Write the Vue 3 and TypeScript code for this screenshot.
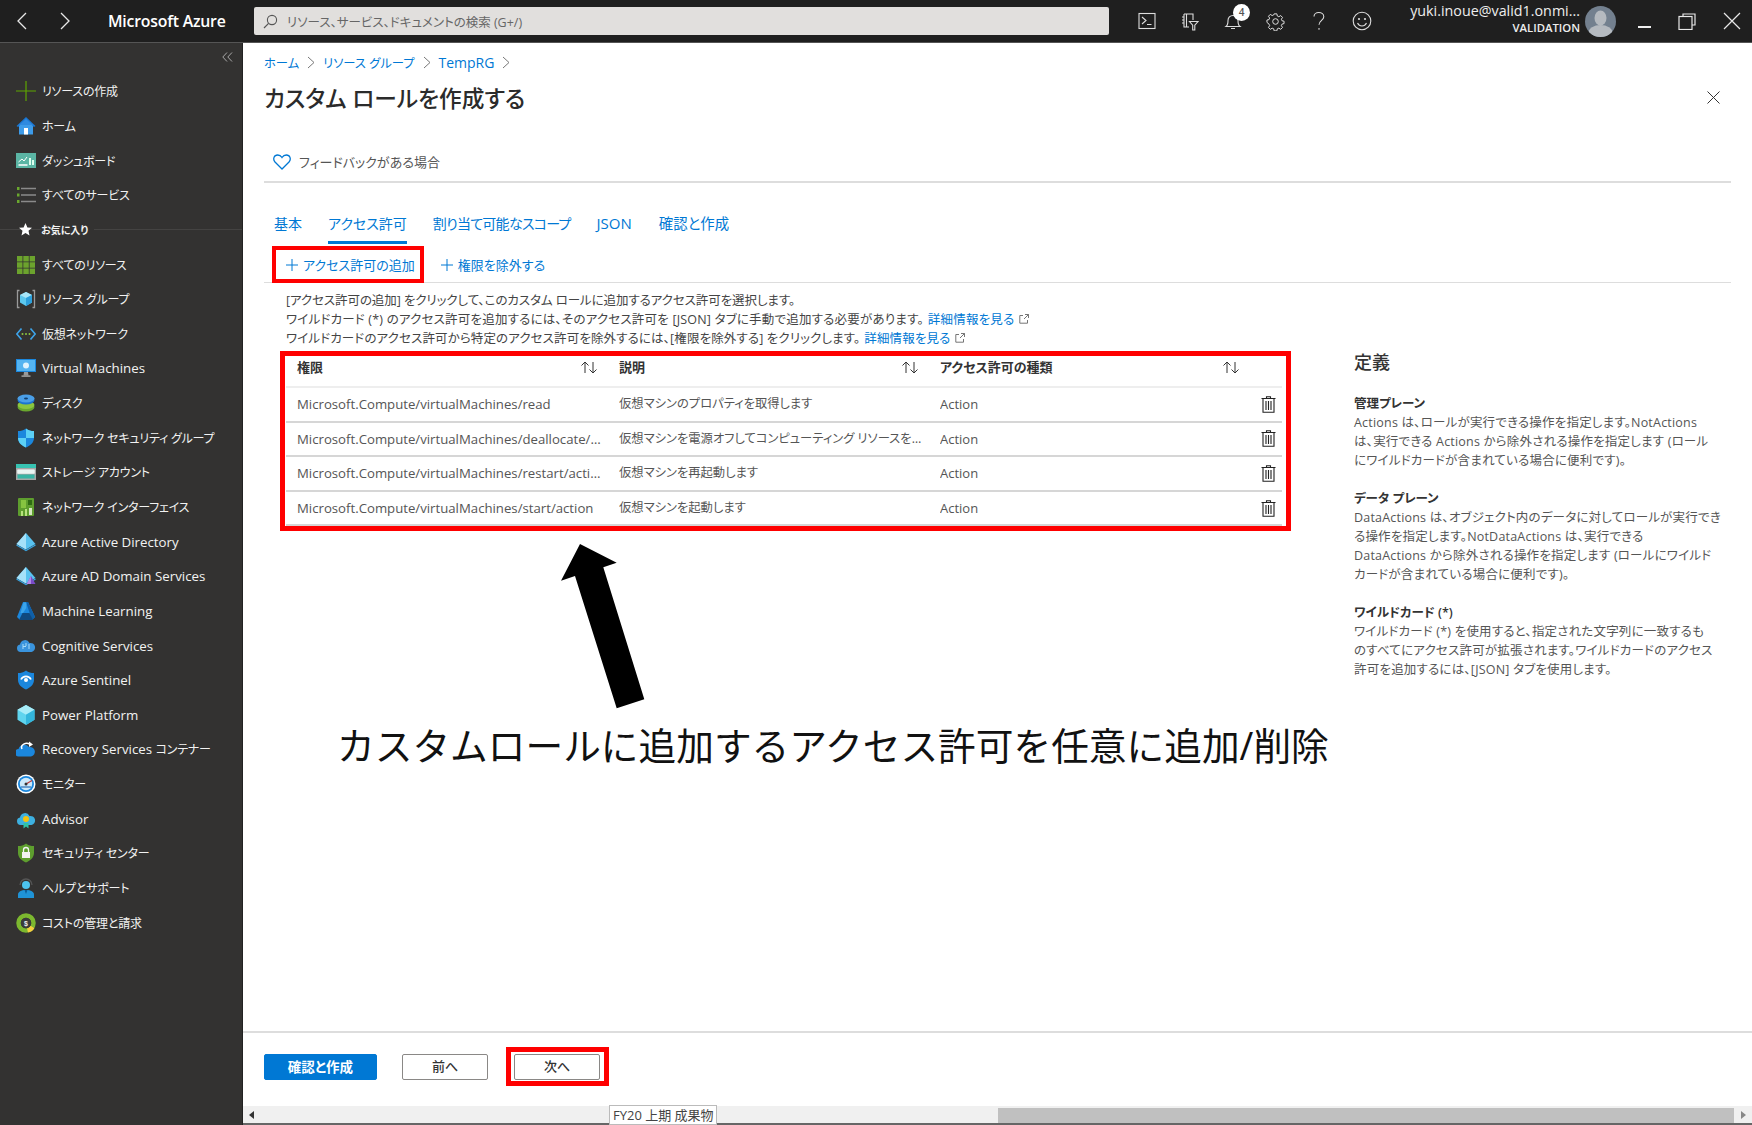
<template>
  <div class="app">
    <header class="topbar">
      <div class="nav-arrows">
        <svg width="11" height="18" viewBox="0 0 11 18"><path d="M10 1 2 9l8 8" fill="none" stroke="#e8e8e8" stroke-width="1.3" /></svg>
        <svg width="11" height="18" viewBox="0 0 11 18"><path d="m1 1 8 8-8 8" fill="none" stroke="#e8e8e8" stroke-width="1.3" /></svg>
      </div>
      <div class="brand">Microsoft Azure</div>
      <div class="search">
        <svg width="15" height="15" viewBox="0 0 15 15"><circle cx="9" cy="6" r="4.6" fill="none" stroke="#555" stroke-width="1.1" /><path d="M5.6 9.4 1 14" stroke="#555" stroke-width="1.2" /></svg>
        <span>リソース、サービス、ドキュメントの検索 (G+/)</span>
      </div>
      <div class="top-icons">
        <span class="top-icon"><svg width="18" height="18" viewBox="0 0 18 18"><rect x="1" y="1.5" width="16" height="15" fill="none" stroke="#ddd" stroke-width="1.1" /><path d="m4 5 4 3.5L4 12M9 12.5h4.5" fill="none" stroke="#ddd" stroke-width="1.1" /></svg></span>
        <span class="top-icon"><svg width="18" height="20" viewBox="0 0 18 20"><path d="M3 3h9v6M3 3v13h5M5.500 3v13M1 6h2M1 9h2M1 12h2" fill="none" stroke="#ddd" stroke-width="1.1" /><path d="M8.500 10.500h8.500l-3.200 3.600V19h-2.100v-4.900z" fill="none" stroke="#ddd" stroke-width="1.1" /></svg></span>
        <span class="top-icon bell">
          <svg width="18" height="20" viewBox="0 0 18 20"><path d="M2 15.500c2-1.500 2-3.500 2-6 0-3 2-5 5-5s5 2 5 5c0 2.500 0 4.500 2 6zM7 17.500h4" fill="none" stroke="#ddd" stroke-width="1.1" /></svg>
          <span class="badge">4</span>
        </span>
        <span class="top-icon"><svg width="19" height="19" viewBox="0 0 19 19"><circle cx="9.500" cy="9.500" r="2.800" fill="none" stroke="#ddd" stroke-width="1" /><path d="M8 1.500h3l.5 2.400 1.700.8 2.100-1.300 2 2.100-1.300 2 .7 1.700 2.300.5v2.600l-2.300.6-.7 1.700 1.300 2-2 2.100-2.100-1.300-1.700.7-.5 2.300H8l-.5-2.300-1.700-.7-2.100 1.300-2-2.100 1.300-2-.7-1.700L0 11V8.400l2.300-.5L3 6.200 1.700 4.200l2-2.100 2.100 1.300 1.700-.7z" transform="translate(.95 .5) scale(.9)" fill="none" stroke="#ddd" stroke-width="1.100" /></svg></span>
        <span class="top-icon"><svg width="14" height="20" viewBox="0 0 14 20"><path d="M2 5.500C2 3 4 1.500 6.800 1.500s5 1.700 5 4.200c0 3.500-4.800 3.800-4.800 8M7 17v1.800" fill="none" stroke="#ddd" stroke-width="1.100" /></svg></span>
        <span class="top-icon"><svg width="20" height="20" viewBox="0 0 20 20"><circle cx="10" cy="10" r="8.800" fill="none" stroke="#ddd" stroke-width="1.100" /><circle cx="7" cy="8" r="1.100" fill="#ddd" /><circle cx="13" cy="8" r="1.100" fill="#ddd" /><path d="M5.500 12c1 2 2.700 3 4.500 3s3.500-1 4.500-3" fill="none" stroke="#ddd" stroke-width="1.100" /></svg></span>
      </div>
      <div class="user">
        <div class="user-mail">yuki.inoue@valid1.onmi...</div>
        <div class="user-org">VALIDATION</div>
      </div>
      <svg class="avatar" width="31" height="31" viewBox="0 0 31 31">
        <defs><clipPath id="av"><circle cx="15.500" cy="15.500" r="15.500" /></clipPath></defs>
        <circle cx="15.500" cy="15.500" r="15.500" fill="#73808f" />
        <g clip-path="url(#av)" fill="#b5bac0"><ellipse cx="15.500" cy="12" rx="6" ry="7.500" /><ellipse cx="15.500" cy="27" rx="12" ry="8" /></g>
      </svg>
      <div class="win-controls">
        <span class="win-min"></span>
        <svg width="18" height="17" viewBox="0 0 18 17"><path d="M5 3.500V1h12v11h-3" fill="none" stroke="#e8e8e8" stroke-width="1.200" /><rect x="1" y="3.500" width="13" height="13" fill="none" stroke="#e8e8e8" stroke-width="1.200" /></svg>
        <svg width="18" height="18" viewBox="0 0 18 18"><path d="m1 1 16 16M17 1 1 17" stroke="#e8e8e8" stroke-width="1.200" /></svg>
      </div>
    </header>

    <aside class="sidebar">
      <div class="collapse">
        <svg width="11" height="10" viewBox="0 0 11 10"><path d="M5 .5.800 5 5 9.500M10 .5 5.800 5l4.200 4.500" fill="none" stroke="#a8a8a8" stroke-width="1" /></svg>
      </div>
      <nav class="side-nav">
        <template v-for="item in navItems" :key="item.label">
          <div v-if="item.fav" class="side-fav">
            <svg width="13" height="13" viewBox="0 0 13 13"><path d="m6.500 0 1.900 4.400 4.600.4-3.500 3 1 4.600-4-2.400-4 2.400 1-4.600-3.500-3 4.600-.4z" fill="#fff" /></svg>
            <span>{{ item.label }}</span>
          </div>
          <div v-else class="side-item">
            <span class="side-icon" v-html="icons[item.icon]"></span>
            <span class="side-label">
              <span v-for="part in splitLabel(item.label)" :key="part" :class="{ ja: isJa(part) }">{{ part }}</span>
            </span>
          </div>
        </template>
      </nav>
    </aside>

    <main class="main">
      <div class="content">
        <div class="breadcrumb">
          <template v-for="crumb in crumbs" :key="crumb">
            <a :class="{ ja: isJa(crumb) }">{{ crumb }}</a>
            <svg width="8" height="13" viewBox="0 0 8 13"><path d="m1 1 6 5.500L1 12" fill="none" stroke="#777" stroke-width="1" /></svg>
          </template>
        </div>
        <div class="title-row">
          <h1>カスタム ロールを作成する</h1>
          <svg width="13" height="13" viewBox="0 0 13 13"><path d="m.5.500 12 12M12.500.500l-12 12" stroke="#333" stroke-width="1" /></svg>
        </div>
        <div class="feedback">
          <svg width="18" height="16" viewBox="0 0 18 16"><path d="M9 15 2 8C-.5 5 1 1 4.700 1 6.700 1 8 2 9 3.500 10 2 11.300 1 13.300 1 17 1 18.500 5 16 8z" fill="none" stroke="#0078d4" stroke-width="1.300" /></svg>
          <span>フィードバックがある場合</span>
        </div>
        <div class="tabs">
          <a v-for="tab in tabs" :key="tab" class="tab" :class="{ active: tab === 'アクセス許可' }">{{ tab }}</a>
        </div>
        <div class="commands">
          <a class="command"><svg width="12" height="12" viewBox="0 0 12 12"><path d="M6 0v12M0 6h12" stroke="#0078d4" stroke-width="1" /></svg>アクセス許可の追加</a>
          <a class="command"><svg width="12" height="12" viewBox="0 0 12 12"><path d="M6 0v12M0 6h12" stroke="#0078d4" stroke-width="1" /></svg>権限を除外する</a>
        </div>
        <div class="info">
          <p>[アクセス許可の追加] をクリックして、このカスタム ロールに追加するアクセス許可を選択します。</p>
          <p>ワイルドカード (*) のアクセス許可を追加するには、そのアクセス許可を [JSON] タブに手動で追加する必要があります。<a>詳細情報を見る</a><svg class="ext" width="10" height="10" viewBox="0 0 10 10"><path d="M4 1.500H.8v7.700h7.700V6M5 5l4.500-4.500M6 .500h3.500V4" fill="none" stroke="#666" stroke-width=".9" /></svg></p>
          <p>ワイルドカードのアクセス許可から特定のアクセス許可を除外するには、[権限を除外する] をクリックします。<a>詳細情報を見る</a><svg class="ext" width="10" height="10" viewBox="0 0 10 10"><path d="M4 1.500H.8v7.700h7.700V6M5 5l4.500-4.500M6 .500h3.500V4" fill="none" stroke="#666" stroke-width=".9" /></svg></p>
        </div>
        <div class="body">
          <div class="perm-table">
            <div class="perm-row perm-head">
              <div v-for="col in columns" :key="col" class="head-cell">
                <span>{{ col }}</span>
                <svg width="18" height="13" viewBox="0 0 18 13"><path d="M5 12V1M1.500 4.500 5 1l3.500 3.500M13 1v11M9.500 8.500 13 12l3.500-3.500" fill="none" stroke="#333" stroke-width="1" /></svg>
              </div>
              <div></div>
            </div>
            <div v-for="row in permissions" :key="row.name" class="perm-row">
              <div class="cell cell-name">{{ row.name }}</div>
              <div class="cell cell-desc">{{ row.desc }}</div>
              <div class="cell">Action</div>
              <div class="trash">
                <svg width="15" height="17" viewBox="0 0 15 17"><path d="M5.500 2V.7h4V2M.5 2.500h14M2 2.500V16.300h11V2.500M5 5v9M7.500 5v9M10 5v9" fill="none" stroke="#222" stroke-width="1.100" /></svg>
              </div>
            </div>
          </div>
          <section class="defs">
            <h2>定義</h2>
            <div v-for="def in definitions" :key="def.title" class="def">
              <h3>{{ def.title }}</h3>
              <p>
                <span v-for="line in def.lines" :key="line" class="def-line">{{ line }}</span>
              </p>
            </div>
          </section>
        </div>
      </div>
      <footer class="footer">
        <button class="btn primary">確認と作成</button>
        <button class="btn">前へ</button>
        <button class="btn">次へ</button>
      </footer>
      <div class="hscroll">
        <svg width="5" height="8" viewBox="0 0 5 8"><path d="M5 0v8L0 4z" fill="#333" /></svg>
        <span class="hscroll-thumb"></span>
        <svg width="5" height="8" viewBox="0 0 5 8"><path d="M0 0v8l5-4z" fill="#888" /></svg>
      </div>
    </main>

    <!-- annotations pasted over the screenshot -->
    <div class="mark mark-add"></div>
    <div class="mark mark-table"></div>
    <div class="mark mark-next"></div>
    <svg class="big-arrow" width="100" height="170" viewBox="0 0 100 170">
      <path d="M40 4 21 40.700 35 36 76.700 168.300 104.300 159.300 63.300 27.300 76.700 22.700z" fill="#000" />
    </svg>
    <div class="note">カスタムロールに追加するアクセス許可を任意に追加/削除</div>
    <div class="tooltip">FY20 上期 成果物</div>
  </div>
</template>

<script setup lang="ts">
type NavItem = { label: string; icon: string; fav?: boolean }

const navItems: NavItem[] = [
  { label: 'リソースの作成', icon: 'plus' },
  { label: 'ホーム', icon: 'home' },
  { label: 'ダッシュボード', icon: 'dash' },
  { label: 'すべてのサービス', icon: 'list' },
  { label: 'お気に入り', icon: '', fav: true },
  { label: 'すべてのリソース', icon: 'grid' },
  { label: 'リソース グループ', icon: 'group' },
  { label: '仮想ネットワーク', icon: 'vnet' },
  { label: 'Virtual Machines', icon: 'vm' },
  { label: 'ディスク', icon: 'disk' },
  { label: 'ネットワーク セキュリティ グループ', icon: 'nsg' },
  { label: 'ストレージ アカウント', icon: 'storage' },
  { label: 'ネットワーク インターフェイス', icon: 'nic' },
  { label: 'Azure Active Directory', icon: 'aad' },
  { label: 'Azure AD Domain Services', icon: 'aadds' },
  { label: 'Machine Learning', icon: 'ml' },
  { label: 'Cognitive Services', icon: 'cog' },
  { label: 'Azure Sentinel', icon: 'sentinel' },
  { label: 'Power Platform', icon: 'power' },
  { label: 'Recovery Services コンテナー', icon: 'recovery' },
  { label: 'モニター', icon: 'monitor' },
  { label: 'Advisor', icon: 'advisor' },
  { label: 'セキュリティ センター', icon: 'security' },
  { label: 'ヘルプとサポート', icon: 'help' },
  { label: 'コストの管理と請求', icon: 'cost' },
]

const isJa = (text: string) => /[^\x00-\x7f]/.test(text)
// latin and japanese runs get different sizes, so mixed labels are split
const splitLabel = (label: string) => label.split(/(?<=[\x00-\x7f])(?=[^\x00-\x7f ])/)

const svg = (body: string) => `<svg width="20" height="20" viewBox="0 0 20 20">${body}</svg>`
const cloud = (fill: string) => `<path d="M4.500 16A3.800 3.800 0 0 1 4 8.500 5 5 0 0 1 13.500 7 4.500 4.500 0 0 1 15.500 16z" fill="${fill}"/>`

const icons: Record<string, string> = {
  plus: svg('<path d="M10 0v20M0 10h20" stroke="#5ea500" stroke-width="1.200"/>'),
  home: svg('<path d="M3 9h14v9.500H3z" fill="#3d9be9"/><path d="M10 1 .5 10l1.500 1L10 4l8 7 1.500-1z" fill="#1976d2"/><path d="M10 3 3 9h14z" fill="#2f8ae0"/><rect x="8" y="12" width="4" height="6.500" fill="#fff"/>'),
  dash: svg('<rect x="0" y="2" width="20" height="15" fill="#5bb5a4"/><path d="M2.500 11 6 8l2 2 3-4" fill="none" stroke="#fff" stroke-width="1"/><path d="M2.500 14h9" stroke="#fff" stroke-width="1.500"/><path d="M14 7v7M17 9v5" stroke="#dfe" stroke-width="2"/>'),
  list: svg('<path d="M5 3.500h15M5 10h15M5 16.500h15" stroke="#8a8a8a" stroke-width="1.400"/><path d="M1 2h2.500v3H1zM1 8.500h2.500v3H1zM1 15h2.500v3H1z" fill="#6aa82e"/>'),
  grid: svg('<path d="M1 1h5.500v5.500H1zM7.300 1h5.500v5.500H7.300zM13.600 1H19v5.500h-5.400zM1 7.300h5.500v5.500H1zM7.300 7.300h5.500v5.500H7.300zM13.600 7.300H19v5.500h-5.400zM1 13.600h5.500V19H1zM7.300 13.600h5.500V19H7.300zM13.600 13.600H19V19h-5.400z" fill="#6ca32d"/>'),
  group: svg('<path d="M3.500 1.500H1.500v17h2M16.500 1.500h2v17h-2" fill="none" stroke="#9a9a9a" stroke-width="1.300"/><path d="m10 3 6 3v7.500l-6 3.500-6-3.500V6z" fill="#5cc8ee"/><path d="m10 3 6 3-6 3-6-3z" fill="#a8e6f8"/><path d="M10 9v8l6-3.500V6z" fill="#2c9fdb"/>'),
  vnet: svg('<path d="M5.500 4.500.8 10l4.700 5.500M14.500 4.500l4.700 5.500-4.700 5.500" fill="none" stroke="#3ea3e8" stroke-width="1.700"/><circle cx="6.500" cy="10" r="1" fill="#8cc63f"/><circle cx="10" cy="10" r="1" fill="#8cc63f"/><circle cx="13.500" cy="10" r="1" fill="#8cc63f"/>'),
  vm: svg('<rect x="0" y="1" width="20" height="13" fill="#1b87dd"/><rect x="1" y="2" width="18" height="11" fill="#55b4f0"/><circle cx="10" cy="7.500" r="3" fill="#dff3fd"/><path d="M8 14h4l.5 3.500h-5z" fill="#999"/><path d="M5.500 17.500h9v1.200h-9z" fill="#bbb"/>'),
  disk: svg('<ellipse cx="10" cy="14" rx="8.500" ry="4.500" fill="#6aa82e"/><ellipse cx="10" cy="12" rx="8.500" ry="4" fill="#8cc63f"/><ellipse cx="10" cy="7" rx="8.500" ry="4.500" fill="#1b75d0"/><ellipse cx="10" cy="5.500" rx="8.500" ry="4" fill="#4a9fe8"/><ellipse cx="10" cy="5.500" rx="2" ry="1" fill="#123e6e"/>'),
  nsg: svg('<path d="M10 .5c2.500 2 5 2.500 8 2.500v7c0 4.500-3.500 7.500-8 9.500-4.500-2-8-5-8-9.500V3c3 0 5.500-.5 8-2.500z" fill="#1b87dd"/><path d="M10 .5c2.500 2 5 2.500 8 2.500v7H10zM2 10h8v9.500C5.500 17.500 2 14.500 2 10z" fill="#5cd0f5"/>'),
  storage: svg('<rect x="0" y="2" width="20" height="16" fill="#a6a6a6"/><rect x="0" y="2" width="20" height="4" fill="#37c2b1"/><rect x="1.500" y="7.500" width="17" height="4" fill="#fff"/><rect x="1.500" y="8" width="17" height="3.500" fill="#e9f5f3"/><rect x="1.500" y="12.500" width="17" height="4" fill="#37b4a4"/>'),
  nic: svg('<rect x="2" y="1" width="16" height="18" rx="1" fill="#5e9e2e"/><rect x="5" y="3" width="5" height="8" fill="#86c440"/><rect x="12" y="3" width="4" height="5" fill="#2f6b13"/><path d="M5 14h2v5H5zM9 12h2v7H9z" fill="#b8e27e"/><path d="M13 11h3v7h-3z" fill="#d5e8c0"/>'),
  aad: svg('<path d="m10 1 9.500 11-9.500 5.500L.5 12z" fill="#59c2ef"/><path d="M10 1v16.500L.5 12z" fill="#a5e1f9"/><path d="M.5 13 10 18.500l9.500-5.500" fill="none" stroke="#3aa4e0" stroke-width="1.300"/>'),
  aadds: svg('<path d="m10 1 9.500 11-9.500 5.500L.5 12z" fill="#59c2ef"/><path d="M10 1v16.500L.5 12z" fill="#a5e1f9"/><path d="M.5 13 10 18.500l9.500-5.500" fill="none" stroke="#3aa4e0" stroke-width="1.300"/><path d="m15 10 4.500 8h-9z" fill="#7b4bc8"/><path d="m15 10v8h-4.500z" fill="#b18be8"/>'),
  ml: svg('<path d="M7 1h5l7 15-3 3H4L1 16z" fill="#1b87dd"/><path d="M10 1h2l7 15-3 3z" fill="#0f5fa8"/><path d="M6.500 12h7l3.500 7H3z" fill="#10497f"/><path d="M7.500 1.500h2.800V7L7 12H4.500z" fill="#3ca4ea"/>'),
  cog: svg(cloud('#3a94dd') + '<path d="M7 8v5M7 10.500h3M13 8v5M10 7v3" stroke="#a8dcf8" stroke-width="1"/>'),
  sentinel: svg('<path d="M10 .5c2.500 2 5 2.500 8 2.500v7c0 4.500-3.500 7.500-8 9.500-4.500-2-8-5-8-9.500V3c3 0 5.500-.5 8-2.500z" fill="#1b87dd"/><circle cx="10" cy="10" r="2" fill="#fff"/><path d="M5 9.500a5.500 5.500 0 0 1 10 0" fill="none" stroke="#fff" stroke-width="1.700"/>'),
  power: svg('<path d="m10 0 8.500 4.800v10L10 20l-8.500-5.200v-10z" fill="#5fd4ee"/><path d="m10 0 8.500 4.800L10 9.800 1.500 4.800z" fill="#a8ecf8"/><path d="M10 9.800V20l8.500-5.200v-10z" fill="#33b6dc"/>'),
  recovery: svg('<path d="M4 18.500a3.700 3.700 0 0 1-.5-7.400A6 6 0 0 1 14 9a4.800 4.800 0 0 1 2 9.500z" fill="#1b87dd" transform="translate(-1 -1)"/><path d="M6 10a5 4 0 0 1 8-4.500" fill="none" stroke="#fff" stroke-width="1.500"/><path d="m13 2.500 4 3-4 2.500z" fill="#fff"/>'),
  monitor: svg('<circle cx="10" cy="10" r="9.500" fill="#fff"/><circle cx="10" cy="10" r="8" fill="#1b87dd"/><circle cx="10" cy="10" r="6.200" fill="#cde9fa"/><path d="M10 10 16 6.500" stroke="#c23a3a" stroke-width="1.200"/><circle cx="10" cy="10" r="1.500" fill="#333"/><path d="M5 13h10" stroke="#2c6fb5" stroke-width="1.200"/>'),
  advisor: svg(cloud('#3db0e0') + '<circle cx="10" cy="10" r="3" fill="#f4c20d"/><path d="M7.500 14v5.500l2.500-2 2.500 2V14z" fill="#2ec4a6"/>'),
  security: svg('<path d="M10 .5c2.500 2 5 2.500 8 2.500v7c0 4.500-3.500 7.500-8 9.500-4.500-2-8-5-8-9.500V3c3 0 5.500-.5 8-2.500z" fill="#5e9e2e"/><rect x="6" y="9" width="8" height="6" fill="#f2f2f2"/><path d="M7.500 9V7a2.500 2.500 0 0 1 5 0v2" fill="none" stroke="#f2f2f2" stroke-width="1.300"/>'),
  help: svg('<path d="M4 7a6 6 0 0 1 12 0" fill="none" stroke="#555" stroke-width="1.300"/><circle cx="10" cy="7" r="4" fill="#4cc3ee"/><path d="M2 20v-3.500C2 14 5 12 10 12s8 2 8 4.500V20z" fill="#1f93d6"/><path d="m8.500 12 1.500 4 1.500-4z" fill="#0d5c96"/>'),
  cost: svg('<circle cx="10" cy="10" r="7.500" fill="none" stroke="#7cb82f" stroke-width="4.500"/><path d="M16.500 14a7.500 7.500 0 0 1-5 3.400" fill="none" stroke="#f4d03f" stroke-width="4.500"/><circle cx="10" cy="10" r="5.200" fill="#3a3a3a"/><text x="10" y="12.500" font-size="7" font-weight="700" text-anchor="middle" fill="#eee" font-family="Liberation Sans, sans-serif">$</text>'),
}

const crumbs = ['ホーム', 'リソース グループ', 'TempRG']
const tabs = ['基本', 'アクセス許可', '割り当て可能なスコープ', 'JSON', '確認と作成']
const columns = ['権限', '説明', 'アクセス許可の種類']

const permissions = [
  { name: 'Microsoft.Compute/virtualMachines/read', desc: '仮想マシンのプロパティを取得します' },
  { name: 'Microsoft.Compute/virtualMachines/deallocate/action', desc: '仮想マシンを電源オフしてコンピューティング リソースを解放します' },
  { name: 'Microsoft.Compute/virtualMachines/restart/action', desc: '仮想マシンを再起動します' },
  { name: 'Microsoft.Compute/virtualMachines/start/action', desc: '仮想マシンを起動します' },
]

const definitions = [
  {
    title: '管理プレーン',
    lines: [
      'Actions は、ロールが実行できる操作を指定します。NotActions',
      'は、実行できる Actions から除外される操作を指定します (ロール',
      'にワイルドカードが含まれている場合に便利です)。',
    ],
  },
  {
    title: 'データ プレーン',
    lines: [
      'DataActions は、オブジェクト内のデータに対してロールが実行でき',
      'る操作を指定します。NotDataActions は、実行できる',
      'DataActions から除外される操作を指定します (ロールにワイルド',
      'カードが含まれている場合に便利です)。',
    ],
  },
  {
    title: 'ワイルドカード (*)',
    lines: [
      'ワイルドカード (*) を使用すると、指定された文字列に一致するも',
      'のすべてにアクセス許可が拡張されます。ワイルドカードのアクセス',
      '許可を追加するには、[JSON] タブを使用します。',
    ],
  },
]
</script>

<style>
html,
body {
  margin: 0;
  background: #fff;
}
</style>

<style scoped>
.app {
  position: relative;
  display: grid;
  grid-template-columns: 243px 1fr;
  grid-template-rows: 43px 1fr;
  width: 1752px;
  height: 1125px;
  overflow: hidden;
  font-family: 'Open Sans', 'Noto Sans CJK JP', sans-serif;
  font-feature-settings: 'palt';
  font-size: 13px;
  color: #333;
}

a {
  color: #0078d4;
}

.topbar {
  grid-column: 1 / 3;
  display: flex;
  align-items: center;
  background: #1f1f1f;
  border-bottom: 1px solid #555;
  box-sizing: border-box;
  color: #fff;
}

.nav-arrows {
  display: flex;
  gap: 33px;
  width: 108px;
  padding-left: 16px;
  box-sizing: border-box;
}

.brand {
  width: 146px;
  font-size: 15.800px;
  font-weight: 600;
  letter-spacing: -0.2px;
}

.search {
  display: flex;
  align-items: center;
  gap: 9px;
  width: 855px;
  height: 28px;
  padding-left: 9px;
  box-sizing: border-box;
  background: #e1dfdd;
  border-radius: 2px;
  color: #666;
  font-size: 12.500px;
}

.top-icons {
  display: flex;
  margin-left: 16px;
}

.top-icon {
  position: relative;
  display: flex;
  align-items: center;
  justify-content: center;
  width: 43px;
  height: 42px;
}

.badge {
  position: absolute;
  top: 4px;
  left: 22px;
  width: 17px;
  height: 17px;
  border-radius: 50%;
  background: #fff;
  color: #555;
  font-size: 10px;
  font-weight: 600;
  line-height: 17px;
  text-align: center;
}

.user {
  flex: 1;
  text-align: right;
  color: #eee;
  white-space: nowrap;
}

.user-mail {
  font-size: 14.300px;
  line-height: 18px;
  margin-top: -4px;
}

.user-org {
  font-size: 11.300px;
  font-weight: 600;
  line-height: 16px;
}

.avatar {
  margin-left: 5px;
  flex-shrink: 0;
}

.win-controls {
  display: flex;
  align-items: center;
  gap: 27px;
  width: 136px;
  padding-left: 22px;
  box-sizing: border-box;
}

.win-min {
  width: 13px;
  height: 2px;
  margin-top: 11px;
  background: #eee;
}

.sidebar {
  background: #333231;
  border-right: 1px solid #222;
  box-sizing: border-box;
  color: #f2f2f2;
}

.collapse {
  display: flex;
  justify-content: flex-end;
  padding: 9px 9px 0 0;
  height: 22px;
}

.side-item,
.side-fav {
  display: flex;
  align-items: center;
  height: 34.650px;
}

.side-item {
  padding-left: 16px;
  font-size: 13.300px;
}

.side-icon {
  display: flex;
  width: 26px;
  flex-shrink: 0;
}

.side-label {
  white-space: nowrap;
}

.side-label .ja {
  font-size: 12px;
  letter-spacing: -0.2px;
}

.side-fav {
  gap: 9px;
  padding-left: 19px;
  font-size: 10px;
  font-weight: 600;
  background: linear-gradient(#444342, #444342) center / 100% 1px no-repeat;
}

.side-fav span {
  background: #333231;
  padding-right: 6px;
}

.main {
  display: flex;
  flex-direction: column;
  min-width: 0;
  background: #fff;
}

.content {
  flex: 1;
  padding: 7px 21px 0;
}

.breadcrumb {
  display: flex;
  align-items: center;
  gap: 8px;
  height: 24px;
  padding-top: 1px;
  box-sizing: border-box;
  font-size: 14px;
}

.breadcrumb .ja {
  font-size: 12.300px;
}

.title-row {
  display: flex;
  align-items: center;
  justify-content: space-between;
  height: 32px;
  margin-top: 7px;
  padding-right: 11px;
}

h1 {
  margin: 0;
  font-size: 22.700px;
  font-weight: 500;
  color: #2b2b2b;
}

.feedback {
  display: flex;
  align-items: center;
  gap: 8px;
  height: 39px;
  margin-top: 29px;
  padding-left: 9px;
  border-bottom: 2px solid #ddd;
  color: #555;
}

.tabs {
  display: flex;
  gap: 26px;
  height: 38px;
  margin-top: 22px;
  padding-left: 10px;
  font-size: 14px;
}

.tab {
  height: 39px;
  line-height: 37px;
  box-sizing: border-box;
}

.tab:nth-child(3) {
  letter-spacing: -0.75px;
}

.tab:nth-child(4) {
  font-size: 15px;
}

.tab:nth-child(5) {
  margin-left: 1px;
  font-size: 14.400px;
}

.tab.active {
  border-bottom: 3px solid #0078d4;
}

.commands {
  display: flex;
  gap: 26px;
  height: 40px;
  padding: 4px 0 0 22px;
  box-sizing: border-box;
  border-bottom: 1px solid #ddd;
  align-items: center;
}

.command {
  display: flex;
  align-items: center;
  gap: 5px;
  font-size: 13px;
}

.info {
  margin-top: 8px;
  padding-left: 22px;
  font-size: 12.500px;
  line-height: 19px;
  color: #444;
}

.info p {
  margin: 0;
}

.info p:nth-child(1) {
  letter-spacing: -0.08px;
}

.info p:nth-child(2) {
  letter-spacing: 0.2px;
}

.info p:nth-child(3) {
  letter-spacing: 0.12px;
}

.info a {
  margin-left: 4px;
}

.ext {
  margin-left: 5px;
}

.body {
  display: grid;
  grid-template-columns: 996px 1fr;
  column-gap: 72px;
  margin-top: 2px;
  padding-left: 22px;
}

.perm-table {
  padding-top: 5px;
}

.perm-row {
  display: grid;
  grid-template-columns: 322px 321px 1fr 43px;
  height: 34.600px;
  padding-left: 11px;
  box-sizing: border-box;
  border-bottom: 2px solid #d6d6d6;
  align-items: center;
}

.perm-head {
  height: 33px;
  border-bottom-color: #eee;
  font-weight: 600;
  align-items: start;
}

.head-cell {
  display: flex;
  justify-content: space-between;
  padding: 4px 21px 0 0;
  font-size: 13px;
  line-height: 16px;
  color: #333;
}

.head-cell svg {
  margin-top: 2px;
}

.head-cell:nth-child(3) {
  padding-right: 0;
  width: 300px;
}

.cell {
  padding-right: 14px;
  overflow: hidden;
  white-space: nowrap;
  text-overflow: ellipsis;
  color: #555;
}

.cell-name {
  padding-right: 17px;
  font-size: 13.200px;
}

.cell-desc {
  padding-right: 9px;
  font-size: 12.300px;
  line-height: 18px;
}

.trash {
  display: flex;
  justify-content: center;
  padding-left: 16px;
}

.defs {
  padding-right: 21px;
  font-size: 12.500px;
  line-height: 19px;
  color: #555;
}

.defs h2 {
  margin: -2px 0 18px;
  font-size: 18px;
  font-weight: 500;
  line-height: 28px;
  color: #333;
}

.defs h3 {
  margin: 0;
  font-size: 12.500px;
  font-weight: 600;
  color: #333;
}

.defs p {
  margin: 0 0 19px;
}

.def-line {
  display: block;
  white-space: nowrap;
  letter-spacing: 0.2px;
}

.footer {
  display: flex;
  align-items: center;
  gap: 25px;
  height: 75px;
  padding: 0 21px 5px;
  box-sizing: border-box;
  border-top: 2px solid #ddd;
}

.footer .btn:last-child {
  margin-left: 1px;
}

.btn {
  width: 86px;
  height: 26px;
  padding: 0 0 3px;
  background: #fff;
  border: 1px solid #8a8886;
  border-radius: 2px;
  font-family: inherit;
  font-feature-settings: inherit;
  font-size: 13px;
  font-weight: 500;
  color: #333;
}

.btn.primary {
  width: 113px;
  background: #0078d4;
  border-color: #0078d4;
  color: #fff;
  font-size: 13.500px;
  font-weight: 600;
}

.hscroll {
  display: flex;
  align-items: center;
  justify-content: space-between;
  height: 19px;
  padding: 0 6px;
  box-sizing: border-box;
  position: relative;
  background: #f0f0f0;
  border-bottom: 2px solid #666;
}

.hscroll-thumb {
  position: absolute;
  left: 755px;
  width: 736px;
  top: 2px;
  bottom: 0;
  background: #c0c0c0;
}

.mark {
  position: absolute;
  border: 4px solid #ff0000;
  box-sizing: border-box;
}

.mark-add {
  left: 272px;
  top: 246px;
  width: 152px;
  height: 37px;
}

.mark-table {
  left: 280px;
  top: 351px;
  width: 1011px;
  height: 180px;
  border-width: 5px;
}

.mark-next {
  left: 506px;
  top: 1047px;
  width: 103px;
  height: 39px;
  border-width: 5px;
}

.big-arrow {
  position: absolute;
  left: 540px;
  top: 540px;
  overflow: visible;
}

.note {
  position: absolute;
  left: 337px;
  top: 722px;
  font-size: 37.700px;
  line-height: 48px;
  font-feature-settings: normal;
  white-space: nowrap;
  color: #111;
  font-weight: 400;
}

.tooltip {
  position: absolute;
  left: 609px;
  top: 1105px;
  width: 108px;
  height: 20px;
  padding-left: 3px;
  box-sizing: border-box;
  background: #fff;
  border: 1px solid #bbb;
  font-size: 13px;
  line-height: 18px;
  color: #444;
  white-space: nowrap;
}
</style>
